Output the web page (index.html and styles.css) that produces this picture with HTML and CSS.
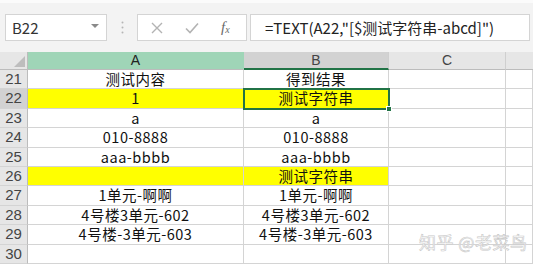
FILE: index.html
```html
<!DOCTYPE html>
<html>
<head>
<meta charset="utf-8">
<link rel="stylesheet" href="styles.css">
</head>
<body>
<div class="app">
  <div class="toolbar">
    <div class="namebox">
      <span class="name">B22</span>
      <svg class="caret" width="8" height="5" viewBox="0 0 8 5"><path d="M0 0 L8 0 L4 4 Z" fill="#8a8a8a"/></svg>
    </div>
    <div class="sep">
      <svg width="3" height="13" viewBox="0 0 3 13"><circle cx="1.5" cy="1.5" r="1" fill="#b5b5b5"/><circle cx="1.5" cy="6.5" r="1" fill="#b5b5b5"/><circle cx="1.5" cy="11.5" r="1" fill="#b5b5b5"/></svg>
    </div>
    <div class="fxgroup">
      <svg class="ico" width="12" height="12" viewBox="0 0 12 12"><path d="M1 1 L11 11 M11 1 L1 11" stroke="#b3b3b3" stroke-width="1.4" fill="none"/></svg>
      <svg class="ico" width="14" height="12" viewBox="0 0 14 12"><path d="M1 6.5 L5 10.5 L13 1.5" stroke="#b3b3b3" stroke-width="1.6" fill="none"/></svg>
      <span class="fx">f<sub>x</sub></span>
    </div>
    <div class="formula">=TEXT(A22,"[$测试字符串-abcd]")</div>
  </div>

  <div class="sheet">
    <div class="hd corner"><svg width="11" height="11" viewBox="0 0 11 11"><path d="M11 0 L11 11 L0 11 Z" fill="#bdbdbd"/></svg></div>
    <div class="hd col col-a">A</div>
    <div class="hd col col-b">B</div>
    <div class="hd col">C</div>
    <div class="hd col last"></div>

    <div class="rh">21</div><div class="c">测试内容</div><div class="c">得到结果</div><div class="c"></div><div class="c last"></div>
    <div class="rh rh-sel">22</div><div class="c yellow">1</div><div class="c yellow sel">测试字符串<span class="handle"></span></div><div class="c"></div><div class="c last"></div>
    <div class="rh">23</div><div class="c">a</div><div class="c">a</div><div class="c"></div><div class="c last"></div>
    <div class="rh">24</div><div class="c">010-8888</div><div class="c">010-8888</div><div class="c"></div><div class="c last"></div>
    <div class="rh">25</div><div class="c">aaa-bbbb</div><div class="c">aaa-bbbb</div><div class="c"></div><div class="c last"></div>
    <div class="rh">26</div><div class="c yellow"></div><div class="c yellow">测试字符串</div><div class="c"></div><div class="c last"></div>
    <div class="rh">27</div><div class="c">1单元-啊啊</div><div class="c">1单元-啊啊</div><div class="c"></div><div class="c last"></div>
    <div class="rh">28</div><div class="c">4号楼3单元-602</div><div class="c">4号楼3单元-602</div><div class="c"></div><div class="c last"></div>
    <div class="rh">29</div><div class="c">4号楼-3单元-603</div><div class="c">4号楼-3单元-603</div><div class="c"></div><div class="c last"></div>
    <div class="rh">30</div><div class="c"></div><div class="c"></div><div class="c"></div><div class="c last"></div>
  </div>

  <div class="watermark">知乎 @老菜鸟</div>
</div>
</body>
</html>
```

FILE: styles.css
```css
* { box-sizing: border-box; }
html, body { margin: 0; padding: 0; }
body {
  width: 533px;
  height: 264px;
  overflow: hidden;
  background: #fff;
  font-family: "Noto Sans CJK SC", "Noto Sans", sans-serif;
}
.app {
  position: relative;
  width: 533px;
  height: 264px;
  overflow: hidden;
}
.toolbar {
  height: 52px;
  background: #f3f3f3;
  border-top: 3px solid #fbfbfb;
  display: flex;
  align-items: flex-start;
  padding-top: 11px;
  padding-left: 5px;
}
.namebox {
  width: 102px;
  height: 27px;
  background: #fff;
  border: 1px solid #d4d4d4;
  display: flex;
  align-items: center;
  justify-content: space-between;
  padding: 0 7px 0 6px;
}
.name {
  font-size: 15px;
  color: #333;
  line-height: 1;
}
.caret { margin-top: -2px; }
.sep {
  width: 30px;
  height: 27px;
  display: flex;
  align-items: center;
  justify-content: center;
}
.fxgroup {
  width: 110px;
  height: 27px;
  background: #fff;
  border: 1px solid #d4d4d4;
  display: flex;
  align-items: center;
  padding-left: 13px;
}
.fxgroup .ico:first-child { margin-right: 22px; }
.fxgroup .ico:nth-child(2) { margin-right: 22px; }
.fx {
  font-family: "Liberation Serif", serif;
  font-style: italic;
  font-size: 15px;
  color: #6a6a6a;
  line-height: 1;
}
.fx sub { font-size: 10px; vertical-align: -1px; }
.formula {
  margin-left: 3px;
  width: 280px;
  height: 27px;
  background: #fff;
  border: 1px solid #d4d4d4;
  font-size: 15px;
  color: #222;
  line-height: 25px;
  padding-left: 14px;
  white-space: nowrap;
}

.sheet {
  display: grid;
  grid-template-columns: 28px 216px 145px 117px 27px;
  grid-template-rows: 18px repeat(10, 19.4px);
  font-size: 14.5px;
}
.hd {
  background: #e6e6e6;
  border-right: 1px solid #cfcfcf;
  border-bottom: 1px solid #bcbcbc;
  color: #444;
  font-family: "Liberation Sans", sans-serif;
  font-size: 14px;
  line-height: 17px;
  text-align: center;
}
.corner {
  display: flex;
  align-items: flex-end;
  justify-content: flex-end;
  padding: 0 2px 2px 0;
  border-right: 1px solid #bcbcbc;
}
.col-a { background: #9fd5b7; color: #222; border-right-color: #9fd5b7; }
.col-b { background: #d2d2d2; color: #444; border-bottom: 2px solid #217346; line-height: 16px; }
.last { border-right: none; }
.rh {
  background: #e6e6e6;
  border-right: 1px solid #bcbcbc;
  border-bottom: 1px solid #d4d4d4;
  color: #444;
  font-family: "Liberation Sans", sans-serif;
  font-size: 15px;
  text-align: center;
  line-height: 18px;
}
.rh-sel { background: #d2d2d2; }
.c {
  border-right: 1px solid #d4d4d4;
  border-bottom: 1px solid #d4d4d4;
  text-align: center;
  color: #111;
  line-height: 18px;
  letter-spacing: 0.5px;
  white-space: nowrap;
  position: relative;
}
.yellow { background: #ffff00; }
.sel {
  outline: 2px solid #217346;
  outline-offset: -1px;
  z-index: 1;
}
.handle {
  position: absolute;
  right: -4px;
  bottom: -4px;
  width: 6px;
  height: 6px;
  background: #217346;
  border: 1px solid #fff;
}
.watermark {
  position: absolute;
  left: 419px;
  top: 229px;
  font-size: 17px;
  letter-spacing: 0.5px;
  color: #ffffff;
  -webkit-text-stroke: 0.6px #c8c8c8;
}
```
